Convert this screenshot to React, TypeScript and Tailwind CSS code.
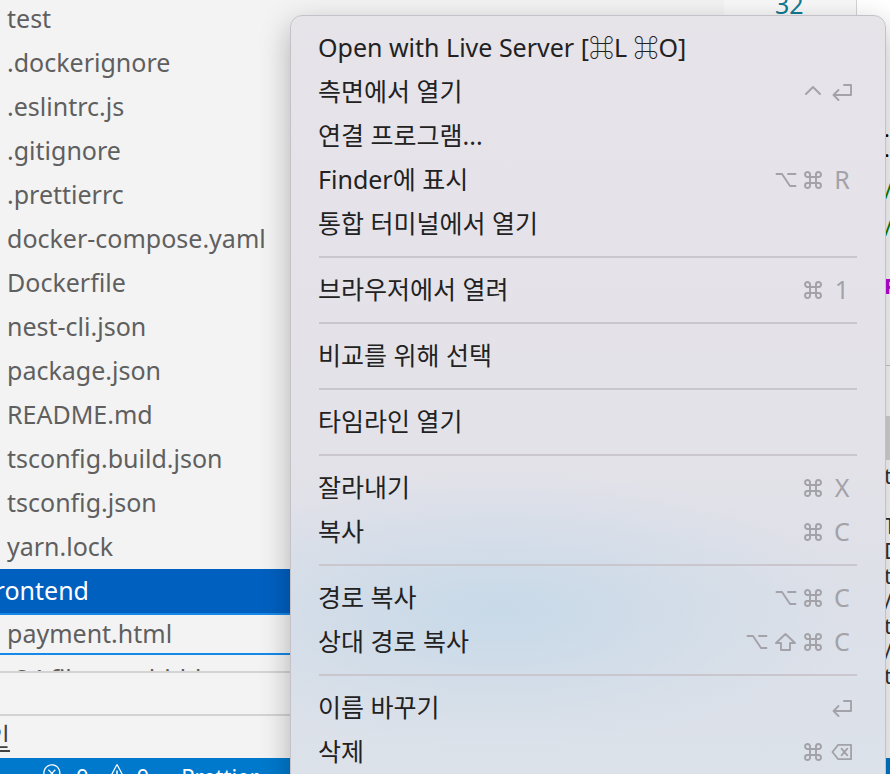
import { ReactNode } from "react";
import { VscError, VscWarning } from "react-icons/vsc";

type Key = "cmd" | "opt" | "shift" | "ctrl" | "return" | "del" | string;
type MenuEntry = { label: string; keys?: Key[] } | "sep";

const files = [
  "test",
  ".dockerignore",
  ".eslintrc.js",
  ".gitignore",
  ".prettierrc",
  "docker-compose.yaml",
  "Dockerfile",
  "nest-cli.json",
  "package.json",
  "README.md",
  "tsconfig.build.json",
  "tsconfig.json",
  "yarn.lock",
];

const menu: MenuEntry[] = [
  { label: "Open with Live Server [⌘L ⌘O]" },
  { label: "측면에서 열기", keys: ["ctrl", "return"] },
  { label: "연결 프로그램..." },
  { label: "Finder에 표시", keys: ["opt", "cmd", "R"] },
  { label: "통합 터미널에서 열기" },
  "sep",
  { label: "브라우저에서 열려", keys: ["cmd", "1"] },
  "sep",
  { label: "비교를 위해 선택" },
  "sep",
  { label: "타임라인 열기" },
  "sep",
  { label: "잘라내기", keys: ["cmd", "X"] },
  { label: "복사", keys: ["cmd", "C"] },
  "sep",
  { label: "경로 복사", keys: ["opt", "cmd", "C"] },
  { label: "상대 경로 복사", keys: ["opt", "shift", "cmd", "C"] },
  "sep",
  { label: "이름 바꾸기", keys: ["return"] },
  { label: "삭제", keys: ["cmd", "del"] },
];

const stroke = {
  fill: "none",
  stroke: "#a3a2a8",
  strokeWidth: 1.9,
  strokeLinecap: "round" as const,
  strokeLinejoin: "round" as const,
};

function Glyph({ k }: { k: Key }) {
  switch (k) {
    case "cmd":
      return (
        <svg width="20" height="20" viewBox="0 0 20 20" {...stroke}>
          <path d="M7 4.5V15.5M13 4.5V15.5M4.5 7H15.5M4.5 13H15.5" />
          <path d="M7 4.5A2.5 2.5 0 1 0 4.5 7M13 4.5A2.5 2.5 0 1 1 15.5 7M7 15.5A2.5 2.5 0 1 1 4.5 13M13 15.5A2.5 2.5 0 1 0 15.5 13" />
        </svg>
      );
    case "opt":
      return (
        <svg width="22" height="18" viewBox="0 0 22 18" {...stroke}>
          <path d="M1.5 3H7L15 15H20.5M13 3H20.5" />
        </svg>
      );
    case "shift":
      return (
        <svg width="23" height="20" viewBox="0 0 23 20" {...stroke}>
          <path d="M11.5 2L2 11H7V18H16V11H21Z" />
        </svg>
      );
    case "ctrl":
      return (
        <svg width="20" height="20" viewBox="0 0 20 20" {...stroke}>
          <path d="M3 12L10 5L17 12" />
        </svg>
      );
    case "return":
      return (
        <svg width="22" height="20" viewBox="0 0 22 20" {...stroke}>
          <path d="M13 3H20V13H2.5M7.5 8L2.5 13L7.5 18" />
        </svg>
      );
    case "del":
      return (
        <svg width="23" height="20" viewBox="0 0 23 20" {...stroke}>
          <path d="M7.5 2.5H21V17.5H7.5L1.5 10Z" />
          <path d="M11 6.5L17 13.5M17 6.5L11 13.5" />
        </svg>
      );
    default:
      return <span className="text-[25px] text-[#a3a2a8]">{k}</span>;
  }
}

function Shortcut({ keys }: { keys: Key[] }) {
  const last = keys[keys.length - 1];
  const mods = keys.slice(0, -1);
  return (
    <div className="flex items-center gap-[6px]">
      {mods.map((m, i) => (
        <Glyph key={i} k={m} />
      ))}
      <div className="ml-[2px] flex w-[22px] items-center justify-center">
        <Glyph k={last} />
      </div>
    </div>
  );
}

function Row({ children, className = "" }: { children: ReactNode; className?: string }) {
  return <div className={`flex h-[44px] shrink-0 items-center ${className}`}>{children}</div>;
}

function Explorer() {
  return (
    <div className="flex w-[724px] shrink-0 flex-col bg-[#f3f3f3] text-[25px] text-[#5f5f5f]">
      <div className="-mt-[3px] flex flex-col">
        {files.map((f) => (
          <Row key={f} className="pl-[7px]">
            {f}
          </Row>
        ))}
      </div>
      <Row className="bg-[#0060c0] text-white">
        <span className="-ml-[14px]">frontend</span>
      </Row>
      <div className="flex h-[42px] shrink-0 items-center border-y-2 border-[#1688e8] pl-[7px]">
        payment.html
      </div>
      <div className="h-[16px] shrink-0 overflow-hidden pl-[2px] pt-[11px] leading-[25px]">
        · 24 files are hidden
      </div>
      <div className="h-[2px] shrink-0 bg-[#d3d3d3]" />
      <div className="h-[41px] shrink-0" />
      <div className="h-[2px] shrink-0 bg-[#d3d3d3]" />
      <div className="flex h-[42px] shrink-0 items-center text-[#424242]">
        <span className="-ml-[36px] underline underline-offset-[4px]">라인</span>
      </div>
    </div>
  );
}

function Editor() {
  const lines = ["t", "", "T", "D", "t", "/", "t", "/", "t"];
  return (
    <div className="flex flex-1">
      <div className="w-[133px] shrink-0 border-r border-[#d4d4d4] bg-[#f8f8f8]">
        <div className="-mt-[14px] pl-[51px] text-[25px] text-[#127a91]">32</div>
      </div>
      <div className="flex flex-1 flex-col bg-white pl-[27px] text-[22px] leading-[25px] text-[#333]">
        <div className="h-[122px] shrink-0" />
        <div className="h-[20px] shrink-0 text-black">·</div>
        <div className="h-[36px] shrink-0 text-black">·</div>
        <div className="h-[37px] shrink-0 text-[#008000]">/</div>
        <div className="h-[58px] shrink-0 text-[#008000]">/</div>
        <div className="h-[92px] shrink-0 font-bold text-[#bc05e0]">P</div>
        <div className="h-px shrink-0 -ml-[27px] bg-[#c8c8c8]" />
        <div className="h-[50px] shrink-0" />
        <div className="h-[44px] shrink-0 -ml-[27px] bg-[#d8d8d8]" />
        <div className="h-[3px] shrink-0" />
        {lines.map((l, i) => (
          <div key={i} className="h-[25px] shrink-0">
            {l}
          </div>
        ))}
      </div>
    </div>
  );
}

function ContextMenu() {
  return (
    <div className="absolute left-[290px] top-[15px] h-[775px] w-[596px] rounded-t-[12px] border border-[#c4c2c8] bg-[radial-gradient(ellipse_60%_18%_at_35%_77%,rgba(196,216,232,0.85),transparent),linear-gradient(180deg,#e6e3e9_0%,#e4e2e9_55%,#dde0e8_75%,#dce2ea_100%)] pt-[10px] text-[25px] text-[#222] shadow-[0_10px_30px_rgba(0,0,0,0.28)]">
      {menu.map((m, i) =>
        m === "sep" ? (
          <div key={i} className="flex h-[22px] items-center px-[28px]">
            <div className="h-[2px] w-full bg-[#c9c7cd]" />
          </div>
        ) : (
          <div key={i} className="flex h-[44px] items-center justify-between pl-[27px] pr-[32px]">
            <span>{m.label}</span>
            {m.keys && <Shortcut keys={m.keys} />}
          </div>
        )
      )}
    </div>
  );
}

export default function App() {
  return (
    <div className="relative h-[774px] w-[890px] overflow-hidden bg-white font-['Noto_Sans','Noto_Sans_CJK_KR','DejaVu_Sans',sans-serif]">
      <div className="flex h-[758px]">
        <Explorer />
        <Editor />
      </div>
      <div className="flex h-[16px] items-start bg-[#0079cc] pl-[42px] pt-[7px] text-[22px] leading-[22px] text-white">
        <VscError size={20} className="mt-[-2px]" />
        <span className="ml-[14px]">0</span>
        <VscWarning size={20} className="ml-[18px] mt-[-2px]" />
        <span className="ml-[10px]">0</span>
        <span className="ml-[32px]">Prettier</span>
      </div>
      <ContextMenu />
    </div>
  );
}
